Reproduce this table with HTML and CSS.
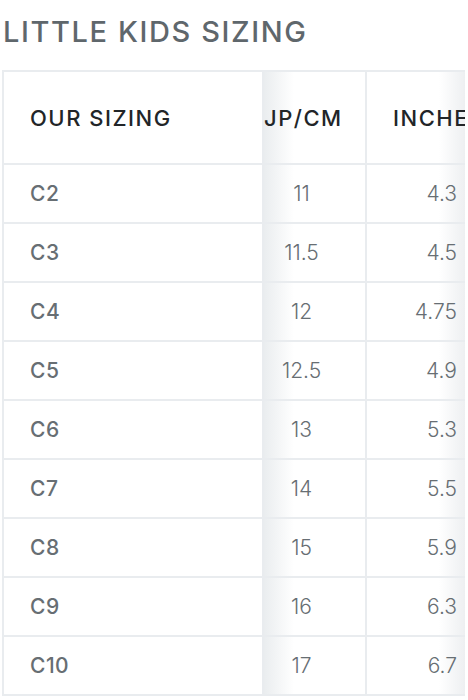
FILE: index.html
```
<!DOCTYPE html>
<html lang="en">

<head>
    <meta charset="UTF-8">
    <meta name="viewport" content="width=device-width, initial-scale=1.0">
    <title>Little Kids Sizing</title>
    <link rel="stylesheet" href="styles.css">
</head>

<body>
    <h1 class="baslik">LITTLE KIDS SIZING</h1>

    <div class="tablo-kutu">
        <table class="beden-tablo">
            <colgroup>
                <col class="kol-bizim">
                <col class="kol-jp">
                <col class="kol-inc">
            </colgroup>
            <thead>
                <tr>
                    <th class="h-bizim">OUR SIZING</th>
                    <th class="h-jp">JP/CM</th>
                    <th class="h-inc">INCHES</th>
                </tr>
            </thead>
            <tbody>
                <tr><td class="c-bizim">C2</td><td class="c-jp">11</td><td class="c-inc">4.3</td></tr>
                <tr><td class="c-bizim">C3</td><td class="c-jp">11.5</td><td class="c-inc">4.5</td></tr>
                <tr><td class="c-bizim">C4</td><td class="c-jp">12</td><td class="c-inc">4.75</td></tr>
                <tr><td class="c-bizim">C5</td><td class="c-jp">12.5</td><td class="c-inc">4.9</td></tr>
                <tr><td class="c-bizim">C6</td><td class="c-jp">13</td><td class="c-inc">5.3</td></tr>
                <tr><td class="c-bizim">C7</td><td class="c-jp">14</td><td class="c-inc">5.5</td></tr>
                <tr><td class="c-bizim">C8</td><td class="c-jp">15</td><td class="c-inc">5.9</td></tr>
                <tr><td class="c-bizim">C9</td><td class="c-jp">16</td><td class="c-inc">6.3</td></tr>
                <tr><td class="c-bizim">C10</td><td class="c-jp">17</td><td class="c-inc">6.7</td></tr>
            </tbody>
        </table>
    </div>
</body>

</html>
```

FILE: styles.css
```
body {
    margin: 0;
    background: #fff;
    font-family: "Inter", "Liberation Sans", sans-serif;
}

.baslik {
    margin: 0;
    padding: 17px 0 0 3px;
    height: 54px;
    box-sizing: border-box;
    font-size: 29px;
    font-weight: 500;
    letter-spacing: 1.6px;
    color: #5f676c;
    line-height: 30px;
}

.tablo-kutu {
    margin: 16px 0 0 2px;
    width: 463px;
    overflow: hidden;
}

.beden-tablo {
    border-collapse: collapse;
    table-layout: fixed;
    width: 520px;
}

.kol-bizim {
    width: 260px;
}

.kol-jp {
    width: 103px;
}

.kol-inc {
    width: 157px;
}

.beden-tablo th,
.beden-tablo td {
    border: 2px solid #e9ecef;
    white-space: nowrap;
    overflow: hidden;
}

.beden-tablo th {
    height: 91px;
    font-size: 22px;
    font-weight: 500;
    letter-spacing: 1.5px;
    color: #222528;
    text-align: left;
}

.beden-tablo td {
    height: 57px;
    font-size: 21px;
    color: #676e73;
}

.h-bizim {
    padding: 0 0 0 26px;
}

.h-jp {
    padding: 0;
    background: linear-gradient(to right, #eaedef, #fff 30px);
}

.h-inc {
    padding: 0 0 0 26px;
    background: linear-gradient(to right, #fff 72px, #eceef0 100px, #fff 103px);
}

.c-bizim {
    padding: 0 0 0 26px;
    font-weight: 500;
    letter-spacing: 0.5px;
    color: #555d62;
}

.c-jp {
    padding: 0 26px 0 0;
    text-align: center;
    font-weight: 300;
    background: linear-gradient(to right, #eaedef, #fff 30px);
}

.c-inc {
    padding: 0 65px 0 0;
    text-align: right;
    font-weight: 300;
    background: linear-gradient(to right, #fff 72px, #eceef0 100px, #fff 103px);
}
```
